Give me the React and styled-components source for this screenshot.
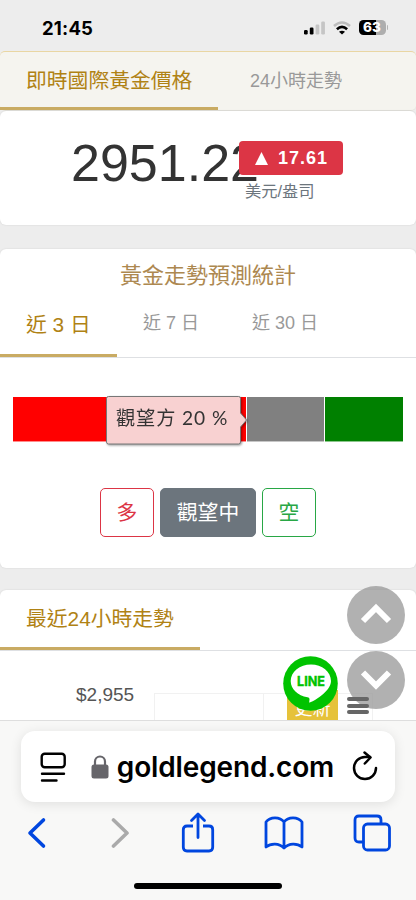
import { useState } from "react";
import styled, { createGlobalStyle } from "styled-components";

const GlobalStyle = createGlobalStyle`
  * {
    box-sizing: border-box;
  }

  body {
    margin: 0;
    background: #ededed;
    font-family: "Liberation Sans", "Noto Sans CJK TC", sans-serif;
  }

  button {
    font-family: inherit;
    padding: 0;
    cursor: pointer;
  }

  svg {
    display: block;
  }
`;

const Screen = styled.div`
  position: relative;
  width: 416px;
  height: 900px;
  display: flex;
  flex-direction: column;
  overflow: hidden;
  background: #ededed;
`;

const StatusBar = styled.header`
  height: 51px;
  flex: none;
  display: flex;
  align-items: center;
  justify-content: space-between;
  padding: 4px 28px 0 42px;
`;

const Clock = styled.span`
  font-family: Inter, sans-serif;
  font-size: 18.5px;
  font-weight: 700;
  letter-spacing: 0.2px;
`;

const StatusIcons = styled.div`
  display: flex;
  align-items: center;
  gap: 8px;
`;

const Battery = styled.div`
  display: flex;
  align-items: center;
  gap: 1px;

  &::after {
    content: "";
    width: 1.5px;
    height: 5px;
    border-radius: 0 2px 2px 0;
    background: #b3b3b3;
  }
`;

const BatteryLevel = styled.div`
  width: 27px;
  height: 15px;
  border-radius: 4.5px;
  background: linear-gradient(to right, #000 63%, #aeaeae 63%);
  color: white;
  font-family: Inter, sans-serif;
  font-size: 13.5px;
  font-weight: 800;
  line-height: 15px;
  text-align: center;
`;

const Content = styled.main`
  flex: 1;
  min-height: 0;
  overflow: hidden;
`;

const Tabs = styled.nav`
  height: ${(p) => p.$height}px;
  display: flex;
  align-items: stretch;
  border-bottom: 1px solid #dee0e3;
`;

const PriceTabs = styled(Tabs)`
  background: #f5f4ef;
  border: 1px solid #e9d6a3;
  border-bottom-color: #e3e2dc;
  border-width: 1px 0;
  border-radius: 5px;
`;

const Tab = styled.button`
  width: ${(p) => p.$width}px;
  padding: 0 0 ${(p) => p.$lift || 0}px ${(p) => p.$inset}px;
  border: 0;
  border-bottom: 3px solid ${(p) => (p.$active ? "#c9ab63" : "transparent")};
  background: transparent;
  color: ${(p) => (p.$active ? "#b08214" : "#999")};
  font-size: ${(p) => (p.$active ? 20.8 : 18)}px;
  text-align: left;
  white-space: nowrap;
`;

const Card = styled.section`
  height: ${(p) => p.$height}px;
  margin-bottom: ${(p) => p.$gap}px;
  background: white;
  border-radius: 6px;
  box-shadow: 0 0 2px rgba(0, 0, 0, 0.12);
`;

const PriceRow = styled.div`
  display: flex;
  padding: 25px 0 0 71px;
`;

const Price = styled.div`
  width: 168px;
  color: #333;
  font-size: 52px;
  line-height: 54px;
  white-space: nowrap;
`;

const Change = styled.div`
  position: relative;
  margin-top: 5px;
`;

const ChangeBadge = styled.div`
  width: 104px;
  height: 34px;
  display: flex;
  align-items: center;
  justify-content: center;
  gap: 10px;
  padding-left: 1px;
  background: #dc3545;
  border-radius: 4px;
  color: white;
  font-size: 18px;
  font-weight: 700;
  letter-spacing: 1px;
`;

const Unit = styled.div`
  padding-left: 6px;
  color: #6c757d;
  font-size: 16.3px;
  line-height: 32px;
`;

const Title = styled.h2`
  margin: 0;
  height: 48px;
  color: #ad8850;
  font-size: 22px;
  font-weight: 400;
  line-height: 53px;
  text-align: center;
`;

const StackedBar = styled.div`
  position: relative;
  height: 45px;
  margin: 39px 13px 46px;
  display: flex;
  gap: 1px;
`;

const Segment = styled.div`
  flex: ${(p) => p.$share};
  background: ${(p) => p.$color};
  border-bottom: 1px solid rgba(255, 255, 255, 0.55);
`;

const Tooltip = styled.div`
  position: absolute;
  top: -2px;
  left: 92px;
  width: 142px;
  height: 51px;
  filter: drop-shadow(1px 1px 1px rgba(0, 0, 0, 0.4));
`;

const TooltipText = styled.span`
  position: absolute;
  top: 0;
  left: 11px;
  color: #333;
  font-family: Lato, "Noto Sans CJK TC", sans-serif;
  font-size: 19.2px;
  letter-spacing: 0.9px;
  line-height: 45px;
  white-space: nowrap;
`;

const VoteRow = styled.div`
  display: flex;
  justify-content: center;
  gap: 6px;
`;

const VoteButton = styled.button`
  width: ${(p) => p.$width}px;
  height: 49px;
  padding-bottom: 4px;
  border: 1px solid ${(p) => p.$color};
  border-radius: 5px;
  background: ${(p) => (p.$filled ? p.$color : "white")};
  color: ${(p) => (p.$filled ? "white" : p.$color)};
  font-size: 20.8px;
`;

const Chart = styled.div`
  height: 70px;
  display: flex;
  align-items: flex-end;
`;

const AxisLabel = styled.span`
  width: 154px;
  height: 39px;
  padding-left: 76px;
  color: #555;
  font-size: 19px;
  line-height: 25px;
`;

const Plot = styled.div`
  flex: 1;
  height: 28px;
  display: flex;
  border-left: 1px solid #f1f1f1;
`;

const PlotColumn = styled.div`
  width: 109px;
  border-top: 1px solid #f1f1f1;
  border-right: 1px solid #f1f1f1;
`;

const RefreshButton = styled.button`
  position: absolute;
  top: 690px;
  left: 287px;
  width: 51px;
  height: 31px;
  padding-top: 2px;
  border: 0;
  background: #e6c23a;
  color: white;
  font-size: 18px;
`;

const ScrollButton = styled.button`
  position: absolute;
  top: ${(p) => p.$top}px;
  left: 347px;
  width: 58px;
  height: 58px;
  padding-bottom: 3px;
  border: 0;
  border-radius: 50%;
  background: rgba(150, 150, 150, 0.74);
  display: flex;
  align-items: center;
  justify-content: center;
`;

const MenuLines = styled.div`
  position: absolute;
  top: 697px;
  left: 347px;
  width: 22px;
  display: flex;
  flex-direction: column;
  gap: 2.5px;

  span {
    height: 4px;
    border-radius: 2px;
    background: #666;
  }
`;

const LineBadge = styled.div`
  position: absolute;
  top: 656px;
  left: 283px;
`;

const BrowserBar = styled.footer`
  position: relative;
  flex: none;
  height: 180px;
  border-top: 1px solid #dedede;
  background: #f8f8f7;
  padding-top: 10px;
`;

const AddressBar = styled.div`
  height: 71px;
  margin: 0 21px;
  padding: 0 17px 0 19px;
  display: flex;
  align-items: center;
  justify-content: space-between;
  background: white;
  border-radius: 14px;
  box-shadow: 0 2px 12px rgba(0, 0, 0, 0.1);
`;

const Site = styled.div`
  display: flex;
  align-items: center;
  gap: 8px;
  margin-left: 7px;
`;

const Domain = styled.span`
  font-family: Inter, sans-serif;
  font-size: 28px;
  font-weight: 600;
  letter-spacing: -0.15px;
  white-space: nowrap;
`;

const Toolbar = styled.div`
  display: flex;
  align-items: center;
  height: 62px;
  padding-left: 27px;
  gap: 49px;

  svg:first-child {
    margin-right: 15px;
  }

  svg:nth-child(2) {
    margin-right: 1px;
  }
`;

const HomeIndicator = styled.div`
  width: 148px;
  height: 6px;
  margin: 19px auto 0;
  border-radius: 3px;
  background: black;
`;

function SignalIcon() {
  return (
    <svg width="21" height="14" viewBox="0 0 21 14">
      <rect x="0" y="9" width="3.7" height="4.5" rx="1.2" />
      <rect x="5.8" y="6.5" width="3.7" height="7" rx="1.2" />
      <rect x="11.6" y="3.5" width="3.7" height="10" rx="1.2" fill="#c5c5c5" />
      <rect x="17.2" y="0.5" width="3.7" height="13" rx="1.2" fill="#c5c5c5" />
    </svg>
  );
}

function WifiIcon() {
  return (
    <svg width="18" height="14" viewBox="0 0 18 14" fill="none" strokeWidth="2.6">
      <path d="M1 5Q9-2 17 5" stroke="#bdbdbd" />
      <path d="M3.9 8.2Q9 3.5 14.1 8.2" stroke="#000" />
      <path d="M6 10.8Q9 8.800 12 10.8L9 13.5Z" fill="#000" />
    </svg>
  );
}

function LineIcon() {
  return (
    <svg width="55" height="55" viewBox="0 0 55 55">
      <circle cx="27.5" cy="27.5" r="27.3" fill="#00c300" />
      <path
        d="M28 8.5C16.8 8.5 7.7 15.8 7.7 25C7.7 33 14.8 39.8 24.5 41.2C27.5 41.8 26.3 44 26.2 46.5C28.5 46.7 48 36 48 25C48 15.8 39 8.5 28 8.5Z"
        fill="#fff"
      />
      <text
        x="28"
        y="30.3"
        fill="#00c300"
        stroke="#00c300"
        strokeWidth="0.4"
        textAnchor="middle"
        textLength="28"
        lengthAdjust="spacingAndGlyphs"
        fontFamily="Inter, sans-serif"
        fontSize="13.5"
        fontWeight="700"
      >
        LINE
      </text>
    </svg>
  );
}

function Chevron({ down }) {
  return (
    <svg width="32" height="22" viewBox="0 0 32 22" fill="none">
      <path
        d={down ? "M3 4.5L16 17.5L29 4.5" : "M3 18L16 5L29 18"}
        stroke="#fff"
        strokeWidth="6"
      />
    </svg>
  );
}

function ReaderIcon() {
  return (
    <svg width="26" height="30" viewBox="0 0 26 30" fill="none" stroke="#000" strokeWidth="2.4" strokeLinecap="round">
      <rect x="1.7" y="1.7" width="23" height="13.6" rx="3" />
      <path d="M2 21.8H24M2 28.5H16.5" />
    </svg>
  );
}

function LockIcon() {
  return (
    <svg width="18" height="24" viewBox="0 0 18 24">
      <path d="M4 12V6.5a5 5 0 0 1 10 0V12" fill="none" stroke="#66656a" strokeWidth="2.2" />
      <rect x="0.5" y="9.5" width="17" height="14" rx="2.5" fill="#66656a" />
    </svg>
  );
}

function ReloadIcon() {
  return (
    <svg width="26" height="32" viewBox="0 0 26 32" fill="none" stroke="#000" strokeWidth="2.5" strokeLinecap="round" strokeLinejoin="round">
      <path d="M24 17A11 11 0 1 1 13 6H18" />
      <path d="M12.5 1.5L18.5 6.5L12.8 12.5" />
    </svg>
  );
}

function ToolbarIcons() {
  const line = {
    fill: "none",
    stroke: "#0046df",
    strokeWidth: 2.8,
    strokeLinecap: "round",
    strokeLinejoin: "round",
  };

  return (
    <>
      <svg width="20" height="32" viewBox="0 0 20 32" {...line} strokeWidth="3.6">
        <path d="M16.5 3L3 16L16.5 29" />
      </svg>
      <svg width="20" height="32" viewBox="0 0 20 32" {...line} stroke="#aaa" strokeWidth="3.6">
        <path d="M2.5 3L16 16L2.5 29" />
      </svg>
      <svg width="34" height="43" viewBox="0 0 34 43" {...line}>
        <path d="M12 14H6Q2.3 14 2.3 17.7V35.3Q2.3 39 6 39H28Q31.7 39 31.7 35.3V17.7Q31.7 14 28 14H22" strokeLinecap="butt" />
        <path d="M17 25.5V2.5M10.5 8.5L17 2L23.5 8.5" />
      </svg>
      <svg width="40" height="34" viewBox="0 0 40 34" {...line}>
        <path d="M20 6C16 0.5 6 0.5 2 6V31C7 27 15 27 20 32C25 27 33 27 38 31V6C34 0.5 24 0.5 20 6ZM20 6V31" />
      </svg>
      <svg width="38" height="38" viewBox="0 0 38 38" {...line}>
        <path d="M10 28H6Q2 28 2 24V6Q2 2 6 2H24Q28 2 28 6V9" />
        <rect x="10.5" y="10" width="26" height="26" rx="4" />
      </svg>
    </>
  );
}

const votes = [
  { name: "多", color: "#dc3545", width: 54 },
  { name: "觀望中", color: "#6c757d", width: 96 },
  { name: "空", color: "#28a745", width: 54 },
];

const ranges = [
  { name: "近 3 日", width: 117, inset: 26, lift: 5 },
  { name: "近 7 日", width: 109, inset: 26, lift: 9 },
  { name: "近 30 日", width: 117, inset: 26, lift: 9 },
];

function App() {
  const [range, setRange] = useState("近 3 日");
  const [vote, setVote] = useState("觀望中");

  return (
    <Screen>
      <GlobalStyle />
      <StatusBar>
        <Clock>21:45</Clock>
        <StatusIcons>
          <SignalIcon />
          <WifiIcon />
          <Battery>
            <BatteryLevel>63</BatteryLevel>
          </Battery>
        </StatusIcons>
      </StatusBar>

      <Content>
        <PriceTabs $height={60}>
          <Tab $active $width={218} $inset={26} $lift={2}>即時國際黃金價格</Tab>
          <Tab $width={150} $inset={32} $lift={2}>24小時走勢</Tab>
        </PriceTabs>
        <Card $height={114} $gap={24}>
          <PriceRow>
            <Price>2951.22</Price>
            <Change>
              <ChangeBadge>
                <svg width="13" height="13" viewBox="0 0 13 13" fill="#fff">
                  <path d="M6.5 0L13 13H0Z" />
                </svg>
                17.61
              </ChangeBadge>
              <Unit>美元/盎司</Unit>
            </Change>
          </PriceRow>
        </Card>

        <Card $height={319} $gap={22}>
          <Title>黃金走勢預測統計</Title>
          <Tabs $height={61}>
            {ranges.map((r) => (
              <Tab
                key={r.name}
                $active={r.name === range}
                $width={r.width}
                $inset={r.inset}
                $lift={r.lift}
                onClick={() => setRange(r.name)}
              >
                {r.name}
              </Tab>
            ))}
          </Tabs>
          <StackedBar>
            <Segment $share={60} $color="#f00" />
            <Segment $share={20} $color="#808080" />
            <Segment $share={20} $color="#008000" />
            <Tooltip>
              <svg width="142" height="51" viewBox="0 0 142 51">
                <path
                  d="M3.5 1.5H133.5Q135.5 1.5 135.5 3.5V18L141.5 25L135.5 32V47Q135.5 49 133.5 49H3.5Q1.5 49 1.5 47V3.5Q1.5 1.5 3.5 1.5Z"
                  fill="#f8d1d1"
                  stroke="#777"
                />
              </svg>
              <TooltipText>觀望方 20 %</TooltipText>
            </Tooltip>
          </StackedBar>
          <VoteRow>
            {votes.map((v) => (
              <VoteButton
                key={v.name}
                $width={v.width}
                $color={v.color}
                $filled={v.name === vote}
                onClick={() => setVote(v.name)}
              >
                {v.name}
              </VoteButton>
            ))}
          </VoteRow>
        </Card>

        <Card $height={240} $gap={0}>
          <Tabs $height={61}>
            <Tab $active $width={200} $inset={26} $lift={4}>最近24小時走勢</Tab>
          </Tabs>
          <Chart>
            <AxisLabel>$2,955</AxisLabel>
            <Plot>
              <PlotColumn />
              <PlotColumn />
            </Plot>
          </Chart>
        </Card>
      </Content>

      <RefreshButton>更新</RefreshButton>
      <ScrollButton $top={586} aria-label="Up">
        <Chevron />
      </ScrollButton>
      <ScrollButton $top={651} aria-label="Down">
        <Chevron down />
      </ScrollButton>
      <MenuLines>
        <span />
        <span />
        <span />
      </MenuLines>
      <LineBadge>
        <LineIcon />
      </LineBadge>

      <BrowserBar>
        <AddressBar>
          <ReaderIcon />
          <Site>
            <LockIcon />
            <Domain>goldlegend.com</Domain>
          </Site>
          <ReloadIcon />
        </AddressBar>
        <Toolbar>
          <ToolbarIcons />
        </Toolbar>
        <HomeIndicator />
      </BrowserBar>
    </Screen>
  );
}

export default App;
